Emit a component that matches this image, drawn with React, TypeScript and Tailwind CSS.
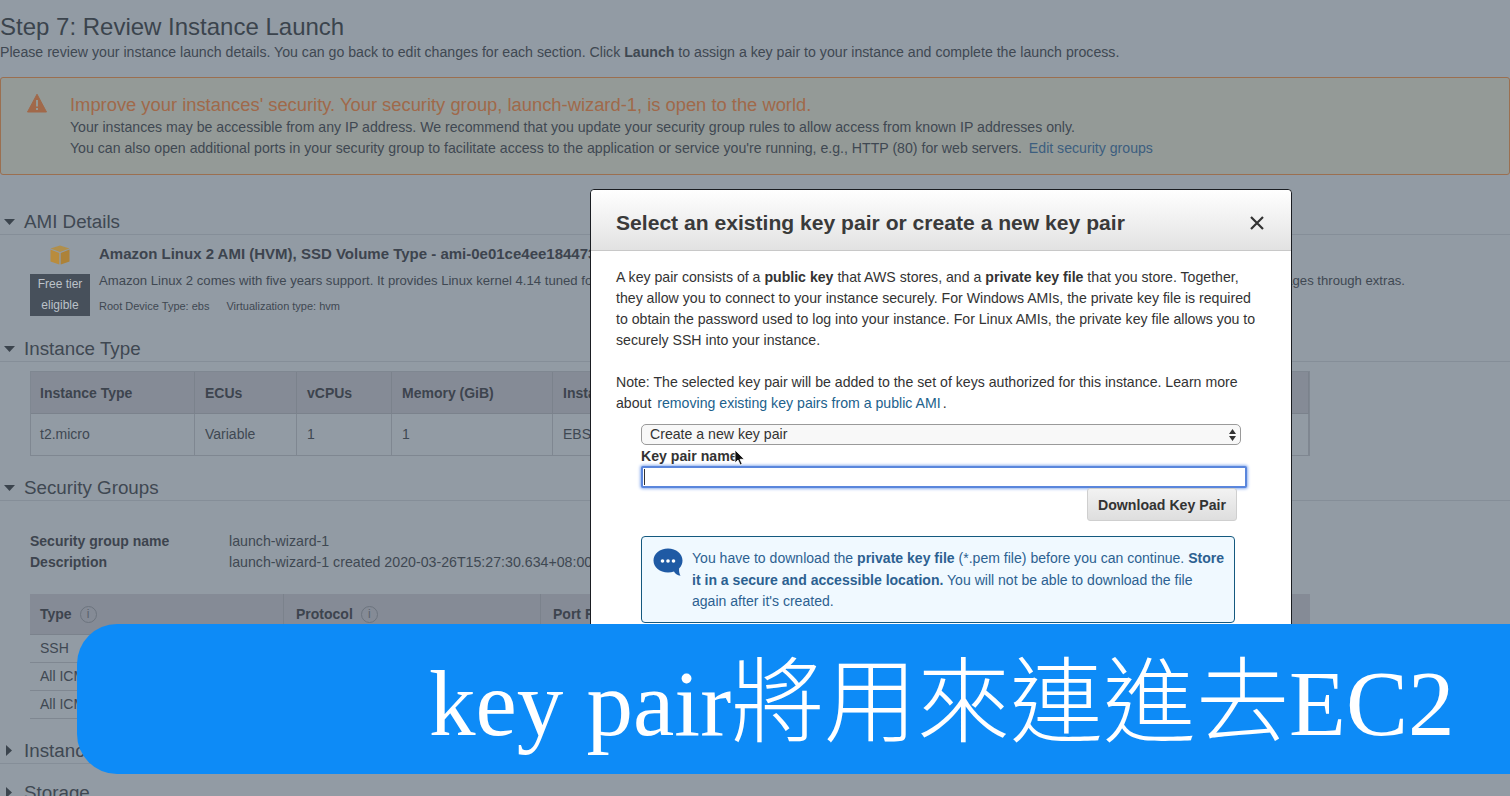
import React from "react";

function SectionHead({ title, open = true, className = "" }: { title: string; open?: boolean; className?: string }) {
  return (
    <div className={`flex h-[26px] items-center border-b border-[#858e98] ${className}`}>
      <span className="flex w-[24px] justify-center pl-[1px] pr-[7px]">
        {open ? (
          <svg width="13" height="8" viewBox="0 0 13 8"><path d="M1 1h11L6.5 7z" fill="#3b444d" /></svg>
        ) : (
          <svg width="8" height="13" viewBox="0 0 8 13"><path d="M1 1l6 5.500L1 12z" fill="#3b444d" /></svg>
        )}
      </span>
      <span className="pt-[1px] text-[18.8px] leading-[26px] text-[#3f4852]">{title}</span>
    </div>
  );
}

function InfoDot() {
  return (
    <span className="ml-[8px] inline-flex h-[17px] w-[17px] items-center justify-center rounded-full border border-[#6c747e] text-[12px] font-normal leading-none text-[#5a626c]">
      i
    </span>
  );
}

const th = "border-r border-[#7b828c] px-[10px] font-bold text-[#3d444e] flex items-center";
const thLow = "border-r border-[#7b828c] px-[10px] pt-[2px] font-bold text-[#3d444e] flex items-center";
const td = "border-r border-[#7f8791] px-[10px] text-[#3f4852] flex items-center";

export default function App() {
  return (
    <div className="relative h-[796px] w-[1510px] overflow-hidden bg-[#929ba4] font-['Liberation_Sans',sans-serif] text-[14px] text-[#3f4852]">
      {/* dimmed page */}
      <div className="pt-[13px]">
        <h1 className="text-[24px] leading-[28px] text-[#3b444d]">Step 7: Review Instance Launch</h1>
        <p className="mt-[1px] text-[14.15px] leading-[20px]">
          Please review your instance launch details. You can go back to edit changes for each section. Click <b>Launch</b> to assign a key pair to your instance and complete the launch process.
        </p>

        <div className="mt-[15px] flex h-[98px] rounded-[3px] border border-[#9b6f50] bg-[#949a97] pt-[14px]">
          <div className="w-[69px] pl-[26px]">
            <svg width="20" height="20" viewBox="0 0 20 20" className="mt-[1px]">
              <path d="M10 1.200 19.500 19H.5z" fill="#a1694a" stroke="#a1694a" strokeLinejoin="round" />
              <rect x="9" y="7" width="2" height="6.500" fill="#949a97" />
              <rect x="9" y="15" width="2" height="2" fill="#949a97" />
            </svg>
          </div>
          <div>
            <div className="text-[18.35px] leading-[25px] text-[#a0694a]">Improve your instances' security. Your security group, launch-wizard-1, is open to the world.</div>
            <div className="text-[14.13px] leading-[21px]">Your instances may be accessible from any IP address. We recommend that you update your security group rules to allow access from known IP addresses only.</div>
            <div className="text-[14.13px] leading-[21px]">
              You can also open additional ports in your security group to facilitate access to the application or service you're running, e.g., HTTP (80) for web servers. <span className="ml-[3px] text-[#3c5e7f]">Edit security groups</span>
            </div>
          </div>
        </div>

        <SectionHead title="AMI Details" className="mt-[34px]" />
        <div className="flex pl-[30px] pt-[8px]">
          <div className="w-[60px]">
            <div className="flex h-[31px] justify-center">
              <svg width="20" height="20" viewBox="0 0 20 20" className="mt-[2px]">
                <path d="M10 0.500 19.500 3.500 10 7 .5 3.500z" fill="#b08f4c" />
                <path d="M.5 4.500 9.300 8v11.500L.5 16.500z" fill="#b98c3d" />
                <path d="M19.500 4.500 10.700 8v11.500l8.800-3z" fill="#ad8238" />
              </svg>
            </div>
            <div className="flex h-[42px] flex-col items-center justify-center bg-[#47505b] text-[12px] leading-[21px] text-[#bcc2c9]">
              <span>Free tier</span>
              <span>eligible</span>
            </div>
          </div>
          <div className="pl-[9px]">
            <div className="h-[28px] pt-[2px] text-[15px] font-bold leading-[18px] text-[#3d444e]">Amazon Linux 2 AMI (HVM), SSD Volume Type - ami-0e01ce4ee18447327</div>
            <div className="h-[22px] whitespace-nowrap text-[13.13px] leading-[20px]">
              Amazon Linux 2 comes with five years support. It provides Linux kernel 4.14 tuned for optimal performance on Amazon EC2, systemd 219, GCC 7.3, Glibc 2.26, Binutils 2.29.1, and the latest software packages through extras.
            </div>
            <div className="flex gap-[17px] pt-[5px] text-[11px] leading-[16px]">
              <span>Root Device Type: ebs</span>
              <span>Virtualization type: hvm</span>
            </div>
          </div>
        </div>

        <SectionHead title="Instance Type" className="mt-[20px]" />
        <div className="ml-[30px] mt-[9px] w-[1280px] border border-[#7f8791]">
          <div className="flex h-[42px] border-b border-[#7b828c] bg-[#858b96]">
            <div className={`${thLow} w-[164px] !pl-[9px]`}>Instance Type</div>
            <div className={`${thLow} w-[102px]`}>ECUs</div>
            <div className={`${thLow} w-[95px]`}>vCPUs</div>
            <div className={`${thLow} w-[161px]`}>Memory (GiB)</div>
            <div className={`${thLow} grow`}>Instance Storage (GB)</div>
          </div>
          <div className="flex h-[41px]">
            <div className={`${td} w-[164px] !pl-[9px]`}>t2.micro</div>
            <div className={`${td} w-[102px]`}>Variable</div>
            <div className={`${td} w-[95px]`}>1</div>
            <div className={`${td} w-[161px]`}>1</div>
            <div className={`${td} grow`}>EBS only</div>
          </div>
        </div>

        <SectionHead title="Security Groups" className="mt-[19px]" />
        <div className="ml-[30px] mt-[30px] grid w-[1280px] grid-cols-[199px_1fr] leading-[21px]">
          <b className="text-[#3d444e]">Security group name</b>
          <span className="text-[14.2px]">launch-wizard-1</span>
          <b className="text-[#3d444e]">Description</b>
          <span className="text-[14.2px]">launch-wizard-1 created 2020-03-26T15:27:30.634+08:00</span>
        </div>

        <div className="ml-[30px] mt-[21px] w-[1280px]">
          <div className="flex h-[41px] border-b border-[#7b828c] bg-[#858b96]">
            <div className={`${th} w-[254px]`}>Type<InfoDot /></div>
            <div className={`${th} w-[257px] px-[12px]`}>Protocol<InfoDot /></div>
            <div className={`${th} grow px-[12px] border-r-0`}>Port Range<InfoDot /></div>
          </div>
          {["SSH", "All ICMP - IPv4", "All ICMP - IPv6"].map((r) => (
            <div key={r} className="flex h-[28px] items-center border-b border-[#7f8791] px-[10px]">
              {r}
            </div>
          ))}
        </div>

        <SectionHead title="Instance Details" open={false} className="mt-[19px]" />
        <SectionHead title="Storage" open={false} className="mt-[16px]" />
      </div>

      {/* modal */}
      <div className="absolute left-[590px] top-[189px] h-[540px] w-[702px] rounded-[4px] border border-[#1a1d22] bg-white text-[#333]">
        <div className="flex h-[61px] items-center justify-between rounded-t-[4px] border-b border-[#c8c8c8] bg-gradient-to-b from-white to-[#e2e2e2] pl-[25px] pr-[26px] pt-[6px]">
          <span className="text-[21.1px] font-bold text-[#3a3a3a]">Select an existing key pair or create a new key pair</span>
          <svg width="16" height="16" viewBox="0 0 16 16"><path d="M2 2l12 12M14 2 2 14" stroke="#333" strokeWidth="2.200" /></svg>
        </div>
        <div className="pl-[25px] pr-[30px] pt-[16px] text-[14.14px] leading-[21px]">
          <p className="w-[648px]">
            A key pair consists of a <b>public key</b> that AWS stores, and a <b>private key file</b> that you store. Together, they allow you to connect to your instance securely. For Windows AMIs, the private key file is required to obtain the password used to log into your instance. For Linux AMIs, the private key file allows you to securely SSH into your instance.
          </p>
          <p className="mt-[21px] w-[648px]">
            Note: The selected key pair will be added to the set of keys authorized for this instance. Learn more about <span className="ml-[2px] text-[#21618c]">removing existing key pairs from a public AMI</span> <span className="-ml-[2px]">.</span>
          </p>
        </div>
        <div className="ml-[50px] w-[606px] pt-[10px] text-[14.14px]">
          <div className="flex h-[21px] w-[600px] items-center justify-between rounded-[5px] border border-[#9a9a9a] bg-[#f8f8f8] pb-[2px] pl-[8px] pr-[4px] leading-[18px]">
            <span>Create a new key pair</span>
            <svg width="7" height="12" viewBox="0 0 7 12" className="mt-[2px]"><path d="M3.500 0 7 5H0zM3.500 12 0 7h7z" fill="#333" /></svg>
          </div>
          <div className="h-[21px] pt-[1px] font-bold leading-[21px]">Key pair name</div>
          <div className="flex h-[22px] items-center rounded-[2px] border-2 border-[#5a86dc] bg-white pl-[1px] shadow-[0_0_3px_1px_#8fb0ef]">
            <span className="h-[16px] w-[1px] bg-[#333]" />
          </div>
          <div className="flex justify-end pr-[10px]">
            <div className="flex h-[33px] w-[150px] items-center justify-center rounded-[3px] border border-[#cfcfcf] bg-gradient-to-b from-[#f2f2f2] to-[#dedede] pt-[2px] font-bold text-[#333]">
              Download Key Pair
            </div>
          </div>
          <div className="mt-[15px] flex h-[87px] w-[594px] rounded-[4px] border border-[#14597f] bg-[#f0f9ff] pl-[11px] pt-[4px]">
            <svg width="31" height="30" viewBox="0 0 31 30" className="mt-[7px] shrink-0">
              <path d="M15 .5C6.800.5.5 5.900.5 12.500S6.800 24.500 15 24.500c2.200 0 4.200-.4 6-1.100.9 1.900 3.400 3.900 6.500 4.400-1.100-1.900-1.600-4.400-1.400-7.400 2.300-2.100 3.400-4.900 3.400-7.900C29.500 5.900 23.200.5 15 .5z" fill="#1f5aa4" />
              <circle cx="9.500" cy="13" r="1.800" fill="#fff" />
              <circle cx="15" cy="13" r="1.800" fill="#fff" />
              <circle cx="20.500" cy="13" r="1.800" fill="#fff" />
            </svg>
            <p className="ml-[8px] w-[536px] pt-[7px] text-[14.05px] leading-[21.5px] text-[#2c6191]">
              You have to download the <b>private key file</b> (*.pem file) before you can continue. <b>Store it in a secure and accessible location.</b> You will not be able to download the file again after it's created.
            </p>
          </div>
        </div>
      </div>

      {/* mouse cursor */}
      <svg width="12" height="18" viewBox="0 0 12 18" className="absolute left-[734px] top-[449px]">
        <path d="M1 1v13l3-3 2.200 5 2-.9L6 10.300h4.300z" fill="#111" stroke="#fff" strokeWidth=".8" />
      </svg>

      {/* caption banner */}
      <div className="absolute left-[77px] top-[624px] flex h-[150px] w-[1433px] items-center rounded-l-[40px] bg-[#0d8bf7] pl-[352px] pt-[10px]">
        <span className="whitespace-nowrap font-['Liberation_Serif','Noto_Sans_CJK_TC',serif] text-[93px] font-light leading-[140px] text-white">key pair將用來連進去EC2</span>
      </div>
    </div>
  );
}
